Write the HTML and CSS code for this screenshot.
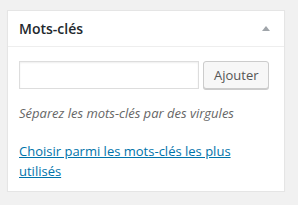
FILE: index.html
```html
<!DOCTYPE html>
<html lang="fr">
<head>
<meta charset="utf-8">
<link rel="stylesheet" href="styles.css">
</head>
<body>
<div class="postbox">
  <div class="hndle">
    <h2 class="title">Mots-clés</h2>
    <span class="toggle"></span>
  </div>
  <div class="inside">
    <div class="add-row">
      <input class="tag-input" type="text">
      <button class="button">Ajouter</button>
    </div>
    <p class="howto">Séparez les mots-clés par des virgules</p>
    <p class="cloud"><a href="#">Choisir parmi les mots-clés les plus utilisés</a></p>
  </div>
</div>
</body>
</html>
```
FILE: styles.css
```css
html, body {
  margin: 0;
  padding: 0;
  background: #f1f1f1;
}
body {
  padding: 10px 0 0 7px;
  font-family: "Open Sans", "Liberation Sans", sans-serif;
  color: #444;
}
.postbox {
  box-sizing: border-box;
  width: 278px;
  background: #fff;
  border: 1px solid #e5e5e5;
  box-shadow: 0 1px 1px rgba(0,0,0,.04);
}
.hndle {
  display: flex;
  align-items: center;
  justify-content: space-between;
  height: 35px;
  padding: 0 12px 0 11px;
  border-bottom: 1px solid #eee;
}
.title {
  margin: 0;
  font-size: 14px;
  font-weight: 600;
  color: #23282d;
  line-height: 1.4;
}
.toggle {
  width: 0;
  height: 0;
  border-left: 4px solid transparent;
  border-right: 4px solid transparent;
  border-bottom: 5px solid #a0a5aa;
  margin-right: 2px;
}
.inside {
  padding: 14px 11px 10px 11px;
}
.add-row {
  display: flex;
  gap: 4px;
}
.tag-input {
  box-sizing: border-box;
  width: 180px;
  height: 28px;
  margin: 0;
  border: 1px solid #ddd;
  box-shadow: inset 0 1px 2px rgba(0,0,0,.07);
  background: #fff;
}
.button {
  box-sizing: border-box;
  width: 66px;
  height: 28px;
  margin: 0;
  padding: 0 10px 1px;
  font-family: "Open Sans", "Liberation Sans", sans-serif;
  font-size: 13px;
  color: #555;
  background: #f7f7f7;
  border: 1px solid #ccc;
  border-radius: 3px;
  box-shadow: 0 1px 0 #ccc;
}
.howto {
  margin: 14px 0 0;
  font-size: 13px;
  font-style: italic;
  color: #666;
  line-height: 20px;
}
.cloud {
  margin: 18px 0 0;
  font-size: 13px;
  line-height: 20px;
}
.cloud a {
  color: #0073aa;
  text-decoration: underline;
}
```
